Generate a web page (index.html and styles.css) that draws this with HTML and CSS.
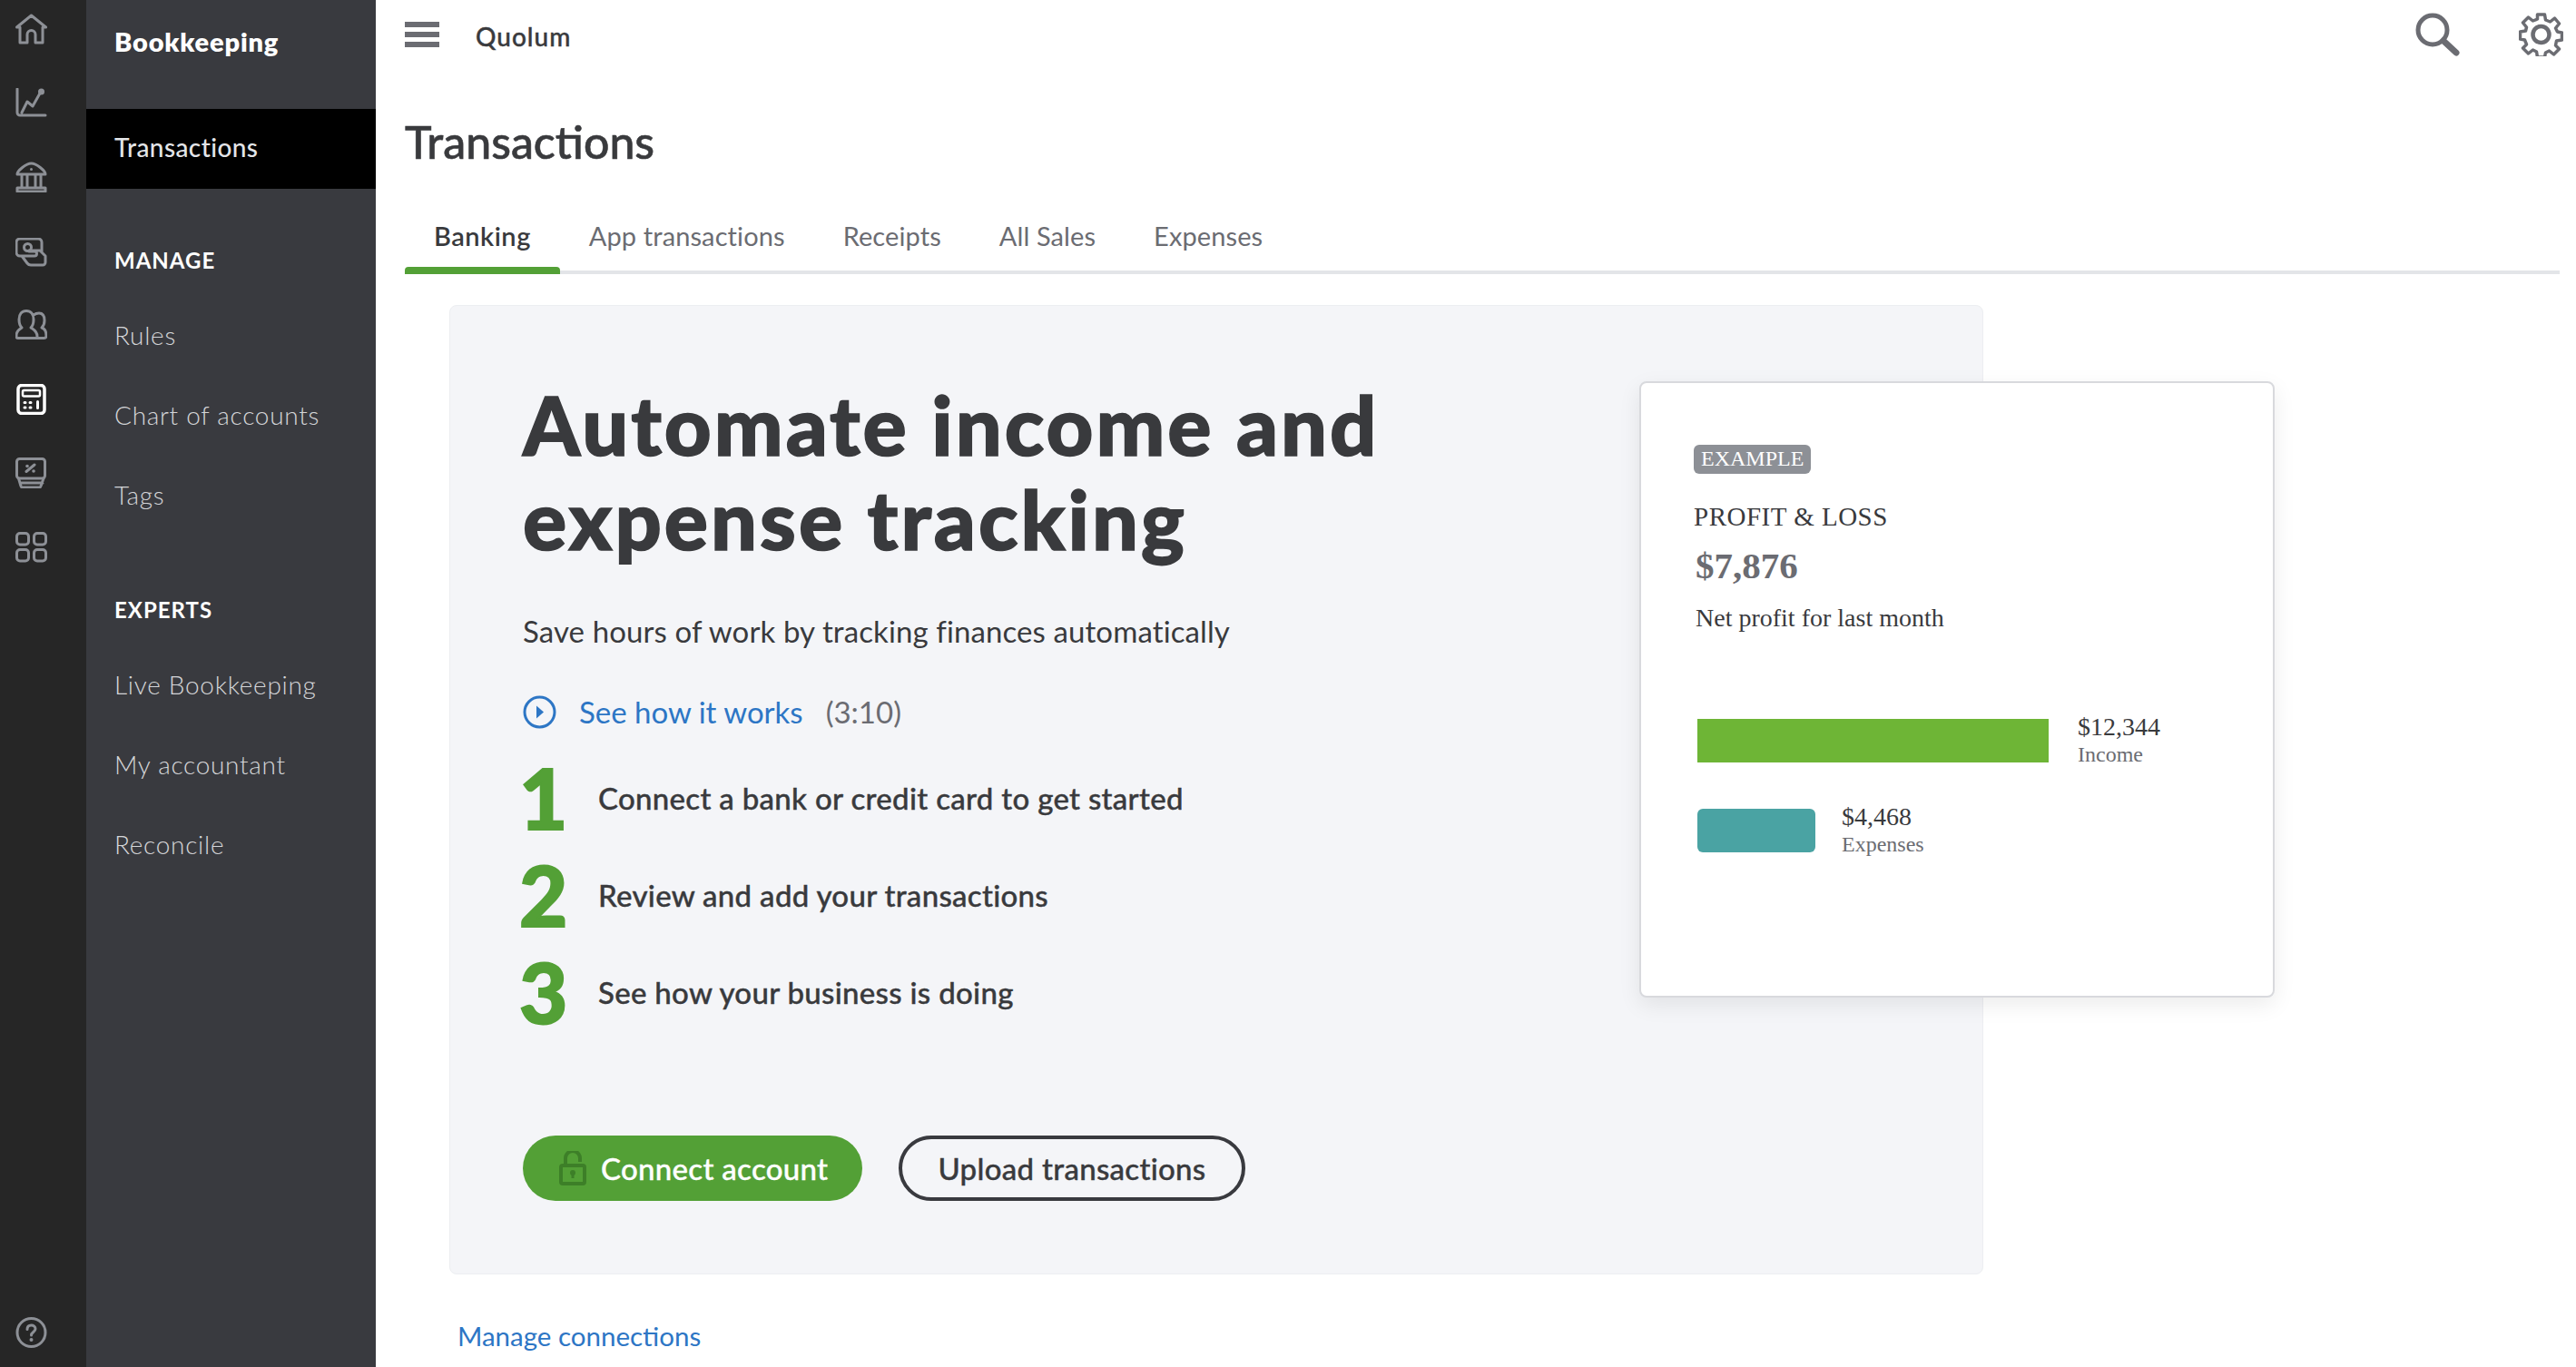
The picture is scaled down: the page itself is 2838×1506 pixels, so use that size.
FILE: index.html
```html
<!DOCTYPE html>
<html lang="en">
<head>
    <meta charset="UTF-8">
    <title>Transactions</title>
    <link rel="stylesheet" href="styles.css">
</head>
<body>
    <div class="app">
        <nav class="rail">
            <div class="rail-icons">
                <svg class="rail-icon" viewBox="0 0 35 34"><path d="M1.500 15 17.500 2 33.500 15H30V32H22V23a4.500 4.500 0 0 0-9 0V32H5V15Z"/></svg>
                <svg class="rail-icon" viewBox="0 0 35 34"><path d="M2 1V27a3 3 0 0 0 3 3H33M7 27 13 15l6 5L28 4"/><circle class="dot" cx="28.500" cy="4" r="3.500"/></svg>
                <svg class="rail-icon" viewBox="0 0 35 34"><path d="M2 14C2 10 12 2 17.500 2S33 10 33 14ZM7 14V29M13 14V29M22 14V29M28 14V29M2 29H33V33H2Z"/><circle class="dot" cx="17.500" cy="8.500" r="1.500"/></svg>
                <svg class="rail-icon rail-icon-shift" viewBox="0 0 35 34"><path d="M10 20H5a4 4 0 0 1-4-4V5a4 4 0 0 1 4-4H25a4 4 0 0 1 4 4V15M7 20H21a2.500 2.500 0 0 0 0-5H15M7 20l6 8a5 5 0 0 0 4 2H30a3 3 0 0 0 3-3V20L27 14H15"/><circle cx="13.500" cy="10.500" r="4"/></svg>
                <svg class="rail-icon" viewBox="0 0 35 34"><path d="M3 31.500H22a2 2 0 0 0 2-2C24 24 20 22 17 20 19 18 20 15 20 11 20 5 17 1.500 12 1.500S4 5 4 11C4 15 5 18 7 20 4 22 1 24 1 29.500a2 2 0 0 0 2 2ZM20 6C22 4.500 24 4 26 4 30 4 32 7 32 12 32 15 31 18 29 20 32 21 34 24 34 29a2.500 2.500 0 0 1-2.500 2.500H24"/></svg>
                <svg class="rail-icon rail-icon-active" viewBox="0 0 35 34"><rect x="3" y="1.500" width="29" height="31" rx="4"/><rect class="thin" x="8" y="7" width="19" height="6.500" rx="1.500"/><path class="keys" d="M10 20.500h1M16 20.500h1M10 26h1M16 26h1M24.500 19.500v7"/></svg>
                <svg class="rail-icon" viewBox="0 0 35 34"><rect x="1.500" y="1.500" width="31" height="21.500" rx="3"/><path d="M3.500 23 6 31.500A2 2 0 0 0 8 33H26a2 2 0 0 0 2-1.500L31 23M5 28H30M12 15.500 21 8"/><circle class="dot" cx="13" cy="9.500" r="1.800"/><circle class="dot" cx="20" cy="15" r="1.800"/></svg>
                <svg class="rail-icon" viewBox="0 0 35 34"><rect x="1.500" y="1.500" width="13" height="12.500" rx="3.500"/><rect x="20.500" y="1.500" width="13" height="12.500" rx="3.500"/><rect x="1.500" y="19.500" width="13" height="12.500" rx="3.500"/><rect x="20.500" y="19.500" width="13" height="12.500" rx="3.500"/></svg>
            </div>
            <svg class="rail-icon" viewBox="0 0 35 34"><circle cx="17.500" cy="17" r="15.500"/><path d="M13 13.500c0-3 2-4.500 4.500-4.500s4.500 1.500 4.500 4c0 3.500-4.500 3.500-4.500 7"/><circle class="dot" cx="17.500" cy="25" r="2"/></svg>
        </nav>

        <aside class="sidebar">
            <div class="sidebar-title">Bookkeeping</div>
            <div class="sidebar-active">Transactions</div>
            <div class="sidebar-section">MANAGE</div>
            <div class="sidebar-link">Rules</div>
            <div class="sidebar-link">Chart of accounts</div>
            <div class="sidebar-link">Tags</div>
            <div class="sidebar-section sidebar-section-second">EXPERTS</div>
            <div class="sidebar-link">Live Bookkeeping</div>
            <div class="sidebar-link">My accountant</div>
            <div class="sidebar-link">Reconcile</div>
        </aside>

        <main class="main">
            <div class="topbar">
                <div class="hamburger"><span></span><span></span><span></span></div>
                <div class="company">Quolum</div>
                <div class="topbar-icons">
                    <svg class="top-icon" viewBox="0 0 49 48"><circle cx="19" cy="19" r="16" fill="none" stroke="#6b6c72" stroke-width="5"/><path d="M31 31 45 44" fill="none" stroke="#6b6c72" stroke-width="7" stroke-linecap="round"/></svg>
                    <svg class="top-icon" viewBox="0 0 48 48"><g fill="none" stroke="#6b6c72" stroke-width="3.500" stroke-linejoin="round"><path d="M20 2h8l1 6 5 2 5-4 5 6-4 5 2 4 5 1v8l-6 1-1 5 4 4-6 6-5-4-4 2-1 5h-8l-1-6-4-2-5 4-6-6 4-4-2-5-5-1v-8l6-1 1-4-4-5 6-6 5 4 5-2z"/><circle cx="24" cy="24" r="9" stroke-width="4.500"/></g></svg>
                </div>
            </div>

            <h1 class="page-title">Transactions</h1>

            <div class="tabs">
                <div class="tab tab-active">Banking</div>
                <div class="tab">App transactions</div>
                <div class="tab">Receipts</div>
                <div class="tab">All Sales</div>
                <div class="tab">Expenses</div>
            </div>

            <section class="hero">
                <h2 class="hero-title">Automate income and<br>expense tracking</h2>
                <p class="hero-sub">Save hours of work by tracking finances automatically</p>
                <div class="video-row">
                    <svg class="play-icon" viewBox="0 0 37 37"><circle cx="18.500" cy="18.500" r="16.500" fill="none" stroke="#2d76c5" stroke-width="3"/><path d="M15 11.500l8 7-8 7z" fill="#2d76c5"/></svg>
                    <a class="link">See how it works</a>
                    <span class="duration">(3:10)</span>
                </div>
                <div class="step">
                    <div class="step-num">1</div>
                    <div class="step-text">Connect a bank or credit card to get started</div>
                </div>
                <div class="step">
                    <div class="step-num">2</div>
                    <div class="step-text">Review and add your transactions</div>
                </div>
                <div class="step">
                    <div class="step-num">3</div>
                    <div class="step-text">See how your business is doing</div>
                </div>
                <div class="hero-buttons">
                    <button class="btn btn-primary">
                        <svg class="lock-icon" viewBox="0 0 30 38"><path d="M7 16V8a8 8 0 0 1 16 0v4" fill="none" stroke="#3d7f28" stroke-width="4"/><rect x="2" y="16" width="26" height="20" rx="2" fill="none" stroke="#3d7f28" stroke-width="4"/><circle cx="15" cy="24" r="3" fill="#3d7f28"/><path d="M13.500 25h3v5h-3z" fill="#3d7f28"/></svg>
                        Connect account
                    </button>
                    <button class="btn btn-outline">Upload transactions</button>
                </div>

                <div class="example-card">
                    <span class="example-badge">EXAMPLE</span>
                    <div class="example-heading">PROFIT &amp; LOSS</div>
                    <div class="example-amount">$7,876</div>
                    <div class="example-note">Net profit for last month</div>
                    <div class="bar-row">
                        <div class="bar bar-income"></div>
                        <div>
                            <div class="bar-value">$12,344</div>
                            <div class="bar-label">Income</div>
                        </div>
                    </div>
                    <div class="bar-row bar-row-second">
                        <div class="bar bar-expenses"></div>
                        <div>
                            <div class="bar-value">$4,468</div>
                            <div class="bar-label">Expenses</div>
                        </div>
                    </div>
                </div>
            </section>

            <a class="link manage-link">Manage connections</a>
        </main>
    </div>
</body>
</html>
```

FILE: styles.css
```css
html, body {
    margin: 0;
    height: 100%;
    overflow: hidden;
    background-color: white;
}
body {
    font-family: Lato, "Open Sans", sans-serif;
    color: #393a3d;
}
.app {
    display: flex;
    height: 1506px;
}
.rail {
    width: 95px;
    flex-shrink: 0;
    background-color: #262626;
    display: flex;
    flex-direction: column;
    justify-content: space-between;
    padding: 15px 0 21px 17px;
    box-sizing: border-box;
}
.rail-icons {
    display: flex;
    flex-direction: column;
    gap: 47.5px;
}
.rail-icon {
    display: block;
    width: 35px;
    height: 34px;
    fill: none;
    stroke: #8d9096;
    stroke-width: 3;
    stroke-linejoin: round;
    stroke-linecap: round;
}
.rail-icon .dot {
    fill: #8d9096;
    stroke: none;
}
.rail-icon-shift {
    margin-top: 2px;
    margin-bottom: -2px;
}
.rail-icon-active {
    stroke: white;
    stroke-width: 3.5;
}
.rail-icon-active .thin {
    stroke-width: 2.5;
}
.rail-icon-active .keys {
    stroke-width: 3;
}
.sidebar {
    width: 319px;
    flex-shrink: 0;
    background-color: #393a3f;
    color: #d4d5d8;
    font-size: 28px;
    font-weight: 300;
}
.sidebar-title {
    height: 120px;
    box-sizing: border-box;
    padding: 28px 0 0 31px;
    font-size: 29px;
    line-height: 36px;
    font-weight: 800;
    letter-spacing: 0.8px;
    color: white;
}
.sidebar-active {
    height: 88px;
    line-height: 85px;
    padding-left: 31px;
    background-color: black;
    color: #e3e5e8;
    font-weight: 500;
    letter-spacing: 0.4px;
}
.sidebar-section {
    margin-top: 61px;
    padding-left: 31px;
    height: 36px;
    line-height: 36px;
    font-size: 24px;
    font-weight: 700;
    letter-spacing: 1px;
    color: white;
}
.sidebar-section-second {
    margin-top: 63px;
}
.sidebar-link {
    height: 88px;
    line-height: 85px;
    padding-left: 31px;
    letter-spacing: 0.7px;
}
.sidebar-section + .sidebar-link {
    margin-top: 22px;
}
.main {
    flex: 1;
    min-width: 0;
    padding-left: 32px;
    padding-right: 14px;
    position: relative;
}
.topbar {
    display: flex;
    align-items: center;
    height: 80px;
}
.hamburger {
    width: 38px;
    display: flex;
    flex-direction: column;
    gap: 5px;
    margin-top: -4px;
}
.hamburger span {
    height: 6px;
    background-color: #6b6c72;
}
.company {
    margin-left: 40px;
    font-size: 28px;
    font-weight: 500;
    letter-spacing: 1px;
    -webkit-text-stroke: 0.4px;
}
.topbar-icons {
    margin-left: auto;
    display: flex;
    gap: 65px;
    margin-top: -4px;
}
.top-icon {
    width: 49px;
    height: 48px;
}
.page-title {
    margin: 0;
    padding-top: 47px;
    height: 93px;
    line-height: 58px;
    font-size: 50px;
    font-weight: 500;
    -webkit-text-stroke: 0.6px;
}
.tabs {
    display: flex;
    height: 82px;
    border-bottom: 4px solid #e3e5e8;
    box-sizing: border-box;
    padding-top: 22px;
    margin-right: 4px;
}
.tab {
    padding: 0 32px;
    font-size: 29px;
    line-height: 36px;
    letter-spacing: 0.1px;
    color: #6b6c72;
    position: relative;
}
.tab-active {
    color: #393a3d;
    font-weight: 600;
    letter-spacing: 0.5px;
}
.tab-active::after {
    content: "";
    position: absolute;
    left: 0;
    right: 0;
    top: 52px;
    height: 8px;
    background-color: #53a036;
    border-radius: 4px 4px 0 0;
}
.hero {
    position: relative;
    width: 1690px;
    height: 1068px;
    margin: 34px 0 0 49px;
    box-sizing: border-box;
    padding: 78px 0 0 80px;
    background-color: #f4f5f8;
    border: 1px solid #eceef1;
    border-radius: 8px;
}
.hero-title {
    margin: 0;
    font-size: 90px;
    line-height: 104px;
    font-weight: 900;
    letter-spacing: 3px;
    -webkit-text-stroke: 1.5px;
}
.hero-sub {
    margin: 50px 0 0;
    font-size: 33px;
    line-height: 44px;
    letter-spacing: 0.1px;
}
.video-row {
    display: flex;
    align-items: center;
    margin-top: 47px;
    font-size: 33px;
}
.play-icon {
    width: 37px;
    height: 37px;
    margin-right: 25px;
}
.link {
    color: #2d76c5;
}
.duration {
    margin-left: 25px;
    color: #6b6c72;
}
.step {
    display: flex;
    align-items: center;
    height: 107px;
}
.video-row + .step {
    margin-top: 21px;
}
.step-num {
    width: 83px;
    margin-left: -4px;
    margin-right: 4px;
    font-size: 92px;
    font-weight: 900;
    color: #53a036;
    line-height: 1;
    -webkit-text-stroke: 2px;
}
.step-text {
    font-size: 33px;
    font-weight: 500;
    letter-spacing: 0.3px;
    -webkit-text-stroke: 0.4px;
}
.hero-buttons {
    display: flex;
    gap: 40px;
    margin-top: 105px;
}
.btn {
    height: 72px;
    border-radius: 36px;
    font-family: inherit;
    font-size: 33px;
    font-weight: 500;
    letter-spacing: 0.3px;
    box-sizing: border-box;
    -webkit-text-stroke: 0.4px;
}
.btn-primary {
    width: 374px;
    border: none;
    background-color: #53a036;
    color: white;
    display: flex;
    align-items: center;
    padding: 0 0 0 40px;
    gap: 16px;
}
.lock-icon {
    width: 30px;
    height: 38px;
}
.btn-outline {
    width: 382px;
    border: 4px solid #393a3f;
    background: none;
    color: #393a3d;
}
.example-card {
    position: absolute;
    left: 1310px;
    top: 83px;
    width: 700px;
    height: 679px;
    box-sizing: border-box;
    padding: 68px 0 0 58px;
    background-color: white;
    border: 2px solid #d8d9dd;
    border-radius: 8px;
    box-shadow: 0 8px 24px rgba(0, 0, 0, 0.08);
    font-family: "Liberation Serif", serif;
}
.example-badge {
    display: inline-block;
    height: 32px;
    line-height: 30px;
    padding: 0 8px;
    font-size: 24px;
    color: white;
    background-color: #8d9096;
    border-radius: 6px;
}
.example-heading {
    margin-top: 30px;
    font-size: 29px;
    line-height: 34px;
    letter-spacing: 0.5px;
}
.example-amount {
    margin: 12px 0 0 2px;
    font-size: 41px;
    line-height: 50px;
    font-weight: bold;
    color: #6b6c72;
}
.example-note {
    margin: 15px 0 0 2px;
    font-size: 28px;
    line-height: 36px;
}
.bar-row {
    display: flex;
    gap: 32px;
    margin: 93px 0 0 4px;
}
.bar-row-second {
    margin-top: 45px;
    gap: 29px;
}
.bar {
    height: 48px;
}
.bar-income {
    width: 387px;
    background-color: #6eb536;
}
.bar-expenses {
    width: 130px;
    background-color: #4aa3a3;
    border-radius: 6px;
}
.bar-value {
    font-size: 28px;
    line-height: 30px;
    margin-top: -6px;
}
.bar-label {
    font-size: 24px;
    line-height: 30px;
    color: #6b6c72;
}
.manage-link {
    display: block;
    margin: 48px 0 0 58px;
    font-size: 29.5px;
    line-height: 40px;
}
```
